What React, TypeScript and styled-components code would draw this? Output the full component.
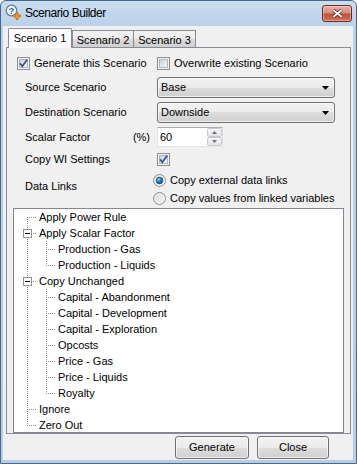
import React from 'react';
import styled, { createGlobalStyle, css } from 'styled-components';

const GlobalStyle = createGlobalStyle`
  html, body { margin: 0; padding: 0; background: #ffffff; }
  body {
    font-family: "Liberation Sans", Arial, sans-serif;
    font-size: 11px;
    line-height: 13px;
    color: #000;
  }
  *, *::before, *::after { box-sizing: border-box; }
`;

const Window = styled.div`
  width: 357px;
  height: 464px;
  display: flex;
  flex-direction: column;
  padding: 0 3px 3px 2px;
  border: 1px solid #4a6788;
  border-radius: 6px 6px 0 0;
  background: linear-gradient(to bottom, #cadcf0 0, #b9d1ea 25px, #b4cde9 100%);
  overflow: hidden;
`;

const TitleBar = styled.div`
  flex: none;
  height: 25px;
  display: flex;
  align-items: flex-start;
`;

const AppIcon = styled.svg`
  flex: none;
  margin: 3px 0 0 2px;
`;

const Caption = styled.span`
  margin: 5px 0 0 4px;
  font-size: 12px;
  line-height: 15px;
  letter-spacing: -0.45px;
`;

const CloseBox = styled.div`
  width: 30px;
  height: 17px;
  margin: 4px 1px 0 auto;
  display: flex;
  align-items: center;
  justify-content: center;
  border: 1px solid #6e2a22;
  border-radius: 3px;
  background: linear-gradient(to bottom, #e9b0a4 0%, #d88d7f 45%, #c44e38 55%, #d2765c 100%);
  box-shadow: inset 0 0 0 1px rgba(255, 255, 255, 0.35);
`;

const Client = styled.div`
  flex: 1;
  display: flex;
  flex-direction: column;
  padding: 2px 2px 1px 3px;
  background: #f0f0f0;
`;

const TabStrip = styled.div`
  height: 20px;
  display: flex;
  align-items: flex-end;
  padding-left: 2px;
`;

const Tab = styled.div<{ $active?: boolean; $w: number; $ml?: number }>`
  width: ${({ $w }) => $w}px;
  margin-left: ${({ $ml = 0 }) => $ml}px;
  display: flex;
  align-items: center;
  justify-content: center;
  border: 1px solid #898c95;
  border-bottom: none;
  ${({ $active }) =>
    $active
      ? css`
          position: relative;
          z-index: 1;
          height: 20px;
          padding-bottom: 1px;
          border-radius: 2px 2px 0 0;
          background: linear-gradient(to bottom, #ffffff, #fbfbfb);
        `
      : css`
          height: 17px;
          margin-bottom: 1px;
          padding-top: 2px;
          background: linear-gradient(to bottom, #f3f3f3 0%, #ebebeb 50%, #dddddd 50%, #cfcfcf 100%);
        `}
`;

const TabPanel = styled.div`
  margin-top: -1px;
  height: 387px;
  display: flex;
  flex-direction: column;
  padding-top: 5px;
  border: 1px solid #898c95;
  background: #f0f0f0;
`;

const CheckRow = styled.div`
  height: 21px;
  display: flex;
  align-items: center;
  padding-left: 10px;
`;

const CheckItem = styled.label<{ $w?: number }>`
  display: flex;
  align-items: center;
  gap: 4px;
  width: ${({ $w }) => ($w ? `${$w}px` : 'auto')};
  white-space: nowrap;
`;

const FieldRow = styled.div<{ $h: number; $mt: number; $top?: boolean }>`
  height: ${({ $h }) => $h}px;
  margin-top: ${({ $mt }) => $mt}px;
  display: flex;
  align-items: ${({ $top }) => ($top ? 'flex-start' : 'center')};
  padding-left: 18px;
`;

const FieldLabel = styled.span<{ $pt?: number }>`
  flex: none;
  width: 132px;
  display: flex;
  justify-content: space-between;
  padding: ${({ $pt = 0 }) => $pt}px 7px 0 0;
  white-space: nowrap;
`;

const Combo = styled.div`
  width: 178px;
  height: 21px;
  display: flex;
  align-items: center;
  justify-content: space-between;
  padding: 0 5px 0 3px;
  border: 1px solid #707070;
  border-radius: 3px;
  background: linear-gradient(to bottom, #f2f2f2 0%, #ebebeb 50%, #dddddd 50%, #cfcfcf 100%);
  box-shadow: inset 0 0 0 1px rgba(252, 252, 252, 0.7);
`;

const Spin = styled.div`
  width: 66px;
  height: 20px;
  display: flex;
  border: 1px solid #abadb3;
  border-color: #abadb3 #dbdfe6 #e3e9ef #e2e3ea;
  background: #ffffff;
`;

const SpinValue = styled.span`
  flex: 1;
  display: flex;
  align-items: center;
  padding-left: 2px;
`;

const SpinButtons = styled.div`
  width: 15px;
  display: flex;
  flex-direction: column;
`;

const SpinButton = styled.span`
  flex: 1;
  display: flex;
  align-items: center;
  justify-content: center;
  border: 1px solid #c9cbce;
  border-radius: 2px;
  background: linear-gradient(to bottom, #f7f7f7, #e4e4e4);
`;

const RadioGroup = styled.div`
  margin-left: -4px;
  display: flex;
  flex-direction: column;
`;

const RadioRow = styled.label`
  height: 18px;
  display: flex;
  align-items: center;
  gap: 4px;
  white-space: nowrap;
`;

const TreeBox = styled.div`
  margin: 1px 0 0 6px;
  width: 331px;
  height: 225px;
  padding-left: 4px;
  border: 1px solid #828790;
  background: #ffffff;
  overflow: hidden;
`;

const TreeRow = styled.div`
  height: 16px;
  display: flex;
`;

const LINE = '#8c8c8c';
const vDots = `repeating-linear-gradient(to bottom, ${LINE} 0 1px, transparent 1px 2px)`;
const hDots = `repeating-linear-gradient(to right, ${LINE} 0 1px, transparent 1px 2px)`;

type CellProps = { $up?: boolean; $down?: boolean; $branch?: boolean };

const cellLines = ({ $up, $down, $branch }: CellProps) => {
  const img: string[] = [];
  const size: string[] = [];
  const pos: string[] = [];
  if ($up && $down) {
    img.push(vDots);
    size.push('1px 16px');
    pos.push('9px 0');
  } else if ($up) {
    img.push(vDots);
    size.push('1px 9px');
    pos.push('9px 0');
  } else if ($down) {
    img.push(vDots);
    size.push('1px 8px');
    pos.push('9px 8px');
  }
  if ($branch) {
    img.push(hDots);
    size.push('10px 1px');
    pos.push('9px 8px');
  }
  if (!img.length) return css``;
  return css`
    background-image: ${img.join(', ')};
    background-size: ${size.join(', ')};
    background-position: ${pos.join(', ')};
  `;
};

const TreeCell = styled.span<CellProps>`
  flex: none;
  width: 19px;
  height: 16px;
  display: flex;
  align-items: flex-start;
  background-repeat: no-repeat;
  ${cellLines}
`;

const Expander = styled.span`
  width: 9px;
  height: 9px;
  margin: 4px 0 0 5px;
  display: flex;
  align-items: center;
  justify-content: center;
  border: 1px solid #919191;
  background: #ffffff;
`;

const Minus = styled.span`
  width: 5px;
  height: 1px;
  background: #000000;
`;

const TreeText = styled.span`
  padding-left: 2px;
  line-height: 16px;
  white-space: nowrap;
`;

const ButtonRow = styled.div`
  margin-top: 2px;
  display: flex;
  justify-content: flex-end;
  gap: 8px;
  padding-right: 22px;
`;

const PushButton = styled.button<{ $w: number }>`
  width: ${({ $w }) => $w}px;
  height: 23px;
  padding: 0;
  font: inherit;
  color: #000;
  border: 1px solid #707070;
  border-radius: 3px;
  background: linear-gradient(to bottom, #f2f2f2 0%, #ebebeb 50%, #dddddd 50%, #cfcfcf 100%);
  box-shadow: inset 0 0 0 1px rgba(252, 252, 252, 0.7);
`;

const CheckBox = ({ checked }: { checked?: boolean }) => (
  <svg width="13" height="13" viewBox="0 0 13 13" style={{ flex: 'none' }}>
    <defs>
      <linearGradient id="cbInner" x1="0" y1="0" x2="1" y2="1">
        <stop offset="0" stopColor="#cbcfd4" />
        <stop offset="1" stopColor="#f8f8f9" />
      </linearGradient>
    </defs>
    <rect x="0.5" y="0.5" width="12" height="12" fill="#f4f4f4" stroke="#8e8f8f" />
    <rect x="2.5" y="2.5" width="8" height="8" fill="url(#cbInner)" stroke="#b3b7bd" />
    {checked && (
      <path d="M3 6.3 L5.3 9.3 L10.2 2.6" fill="none" stroke="#3b4f91" strokeWidth="1.7" />
    )}
  </svg>
);

const Radio = ({ checked }: { checked?: boolean }) => (
  <svg width="13" height="13" viewBox="0 0 13 13" style={{ flex: 'none' }}>
    <defs>
      <linearGradient id="rbBg" x1="0" y1="0" x2="1" y2="1">
        <stop offset="0" stopColor="#d4d6d9" />
        <stop offset="1" stopColor="#fbfbfb" />
      </linearGradient>
      <radialGradient id="rbDot" cx="0.4" cy="0.35" r="0.65">
        <stop offset="0" stopColor="#a6e1fb" />
        <stop offset="0.45" stopColor="#2b82c4" />
        <stop offset="1" stopColor="#0f4a86" />
      </radialGradient>
    </defs>
    <circle cx="6.5" cy="6.5" r="6" fill="url(#rbBg)" stroke="#8e8f8f" />
    <circle cx="6.5" cy="6.5" r="4.5" fill="none" stroke="#f4f4f4" strokeWidth="0.8" />
    {checked && <circle cx="6.5" cy="6.5" r="3.4" fill="url(#rbDot)" stroke="#1d4f7e" strokeWidth="0.6" />}
  </svg>
);

const DropArrow = () => (
  <svg width="7" height="4" viewBox="0 0 7 4">
    <polygon points="0,0 7,0 3.5,4" fill="#000" />
  </svg>
);

const SpinArrow = ({ down }: { down?: boolean }) => (
  <svg width="5" height="3" viewBox="0 0 5 3">
    <polygon points={down ? '0,0 5,0 2.5,3' : '0,3 5,3 2.5,0'} fill="#6a7484" />
  </svg>
);

type Node = { label: string; children?: string[] };

const tree: Node[] = [
  { label: 'Apply Power Rule' },
  { label: 'Apply Scalar Factor', children: ['Production - Gas', 'Production - Liquids'] },
  {
    label: 'Copy Unchanged',
    children: [
      'Capital - Abandonment',
      'Capital - Development',
      'Capital - Exploration',
      'Opcosts',
      'Price - Gas',
      'Price - Liquids',
      'Royalty',
    ],
  },
  { label: 'Ignore' },
  { label: 'Zero Out' },
];

const TreeView = () => {
  const rows: React.ReactNode[] = [];
  tree.forEach((node, i) => {
    const last = i === tree.length - 1;
    rows.push(
      <TreeRow key={node.label}>
        <TreeCell $up={i > 0} $down={!last} $branch>
          {node.children && (
            <Expander>
              <Minus />
            </Expander>
          )}
        </TreeCell>
        <TreeText>{node.label}</TreeText>
      </TreeRow>
    );
    node.children?.forEach((child, j) => {
      rows.push(
        <TreeRow key={child}>
          <TreeCell $up={!last} $down={!last} />
          <TreeCell $up $down={j < node.children!.length - 1} $branch />
          <TreeText>{child}</TreeText>
        </TreeRow>
      );
    });
  });
  return <TreeBox>{rows}</TreeBox>;
};

export default function App() {
  return (
    <>
      <GlobalStyle />
      <Window>
        <TitleBar>
          <AppIcon width="16" height="16" viewBox="0 0 16 16">
            <circle cx="6.5" cy="6.5" r="5.3" fill="#eef5fc" stroke="#5b7fa6" strokeWidth="1.2" />
            <text
              x="6.5"
              y="10"
              textAnchor="middle"
              fontFamily="Liberation Sans, Arial, sans-serif"
              fontWeight="bold"
              fontSize="9"
              fill="#2a62ad"
            >
              ?
            </text>
            <path
              d="M11 8.5 h2 v2.5 h2.5 v2 h-2.5 v2.5 h-2 v-2.5 h-2.5 v-2 h2.5 z"
              fill="#f59a23"
              stroke="#c46a0c"
              strokeWidth="0.8"
            />
          </AppIcon>
          <Caption>Scenario Builder</Caption>
          <CloseBox>
            <svg width="11" height="9" viewBox="0 0 11 9">
              <path d="M1.5 1.2 L9.5 7.8 M9.5 1.2 L1.5 7.8" stroke="#4d1c16" strokeWidth="3.4" />
              <path d="M1.5 1.2 L9.5 7.8 M9.5 1.2 L1.5 7.8" stroke="#ffffff" strokeWidth="1.9" />
            </svg>
          </CloseBox>
        </TitleBar>

        <Client>
          <TabStrip>
            <Tab $active $w={64}>Scenario 1</Tab>
            <Tab $w={62}>Scenario 2</Tab>
            <Tab $w={63} $ml={-1}>Scenario 3</Tab>
          </TabStrip>

          <TabPanel>
            <CheckRow>
              <CheckItem $w={140}>
                <CheckBox checked />
                Generate this Scenario
              </CheckItem>
              <CheckItem>
                <CheckBox />
                Overwrite existing Scenario
              </CheckItem>
            </CheckRow>

            <FieldRow $h={21} $mt={3}>
              <FieldLabel>Source Scenario</FieldLabel>
              <Combo>
                Base
                <DropArrow />
              </Combo>
            </FieldRow>

            <FieldRow $h={21} $mt={4}>
              <FieldLabel>Destination Scenario</FieldLabel>
              <Combo>
                Downside
                <DropArrow />
              </Combo>
            </FieldRow>

            <FieldRow $h={20} $mt={4}>
              <FieldLabel>
                <span>Scalar Factor</span>
                <span>(%)</span>
              </FieldLabel>
              <Spin>
                <SpinValue>60</SpinValue>
                <SpinButtons>
                  <SpinButton>
                    <SpinArrow />
                  </SpinButton>
                  <SpinButton>
                    <SpinArrow down />
                  </SpinButton>
                </SpinButtons>
              </Spin>
            </FieldRow>

            <FieldRow $h={21} $mt={2}>
              <FieldLabel>Copy WI Settings</FieldLabel>
              <CheckBox checked />
            </FieldRow>

            <FieldRow $h={36} $mt={1} $top>
              <FieldLabel $pt={9}>Data Links</FieldLabel>
              <RadioGroup>
                <RadioRow>
                  <Radio checked />
                  Copy external data links
                </RadioRow>
                <RadioRow>
                  <Radio />
                  Copy values from linked variables
                </RadioRow>
              </RadioGroup>
            </FieldRow>

            <TreeView />
          </TabPanel>

          <ButtonRow>
            <PushButton $w={74}>Generate</PushButton>
            <PushButton $w={72}>Close</PushButton>
          </ButtonRow>
        </Client>
      </Window>
    </>
  );
}
